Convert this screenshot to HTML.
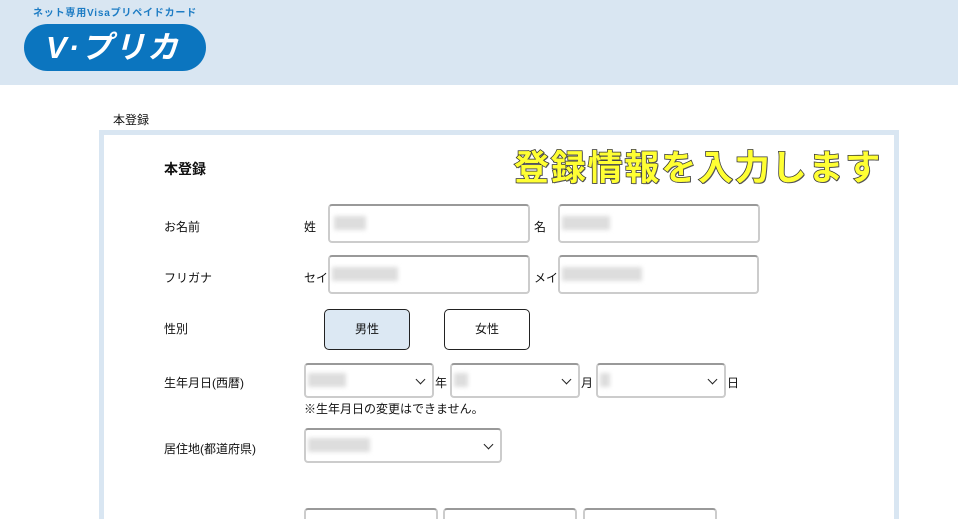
<!DOCTYPE html>
<html><head><meta charset="utf-8"><style>
*{margin:0;padding:0;box-sizing:border-box}
html,body{width:958px;height:519px;overflow:hidden}
body{background:#fff;font-family:"Liberation Sans","Noto Sans CJK JP",sans-serif;font-size:12px;color:#111;position:relative}
.a{position:absolute}
.hdr{left:0;top:0;width:958px;height:85px;background:#d9e6f2}
.pill{left:24px;top:24px;width:182px;height:47px;border-radius:24px;background:#0b75bf;color:#fff;font-weight:bold;font-size:31px;font-style:italic;line-height:47px;padding-left:22px;letter-spacing:2px}
.sub{left:33px;top:4px;font-size:10px;font-weight:bold;color:#1d7cc4;letter-spacing:.8px}
.panel{left:99px;top:130px;width:800px;height:389px;border:5px solid #d9e6f2;border-bottom:none}
.in{border:2px solid #ccc;border-top-color:#999;border-radius:4px;background:#fff}
.blur{background:#ddd;height:14px;filter:blur(2px)}
.btn{border:1px solid #222;border-radius:5px;text-align:center;line-height:38px;font-size:12px}
.chev{position:absolute;right:8px;top:11px;width:7px;height:7px;border-right:1.6px solid #222;border-bottom:1.6px solid #222;transform:rotate(45deg)}
.yl{left:514px;top:140px;font-size:35px;font-weight:bold;color:#ffff33;letter-spacing:1.8px;-webkit-text-stroke:1.5px #333;paint-order:stroke fill;text-shadow:1px 1px 0 #555}
</style></head><body>
<div class="a hdr"></div>
<div class="a sub">ネット専用Visaプリペイドカード</div>
<div class="a pill">V·プリカ</div>
<div class="a" style="left:113px;top:111px">本登録</div>
<div class="a panel"></div>
<div class="a" style="left:164px;top:159px;font-size:14px;font-weight:bold">本登録</div>
<div class="a yl">登録情報を入力します</div>

<div class="a" style="left:164px;top:218px">お名前</div>
<div class="a" style="left:304px;top:218px">姓</div>
<div class="a in" style="left:328px;top:204px;width:202px;height:39px"><div class="blur" style="margin:10px 0 0 4px;width:32px"></div></div>
<div class="a" style="left:534px;top:218px">名</div>
<div class="a in" style="left:558px;top:204px;width:202px;height:39px"><div class="blur" style="margin:10px 0 0 2px;width:48px"></div></div>

<div class="a" style="left:164px;top:269px">フリガナ</div>
<div class="a" style="left:304px;top:269px">セイ</div>
<div class="a in" style="left:328px;top:255px;width:202px;height:39px"><div class="blur" style="margin:10px 0 0 2px;width:66px"></div></div>
<div class="a" style="left:534px;top:269px">メイ</div>
<div class="a in" style="left:558px;top:255px;width:201px;height:39px"><div class="blur" style="margin:10px 0 0 2px;width:80px"></div></div>

<div class="a" style="left:164px;top:320px">性別</div>
<div class="a btn" style="left:324px;top:309px;width:86px;height:41px;background:#dce8f3">男性</div>
<div class="a btn" style="left:444px;top:309px;width:86px;height:41px">女性</div>

<div class="a" style="left:164px;top:374px">生年月日(西暦)</div>
<div class="a in" style="left:304px;top:363px;width:130px;height:35px"><div class="blur" style="margin:8px 0 0 2px;width:38px"></div><i class="chev"></i></div>
<div class="a" style="left:435px;top:374px">年</div>
<div class="a in" style="left:450px;top:363px;width:130px;height:35px"><div class="blur" style="margin:8px 0 0 2px;width:14px"></div><i class="chev"></i></div>
<div class="a" style="left:581px;top:374px">月</div>
<div class="a in" style="left:596px;top:363px;width:130px;height:35px"><div class="blur" style="margin:8px 0 0 2px;width:10px"></div><i class="chev"></i></div>
<div class="a" style="left:727px;top:374px">日</div>
<div class="a" style="left:304px;top:400px">※生年月日の変更はできません。</div>

<div class="a" style="left:164px;top:440px">居住地(都道府県)</div>
<div class="a in" style="left:304px;top:428px;width:198px;height:35px"><div class="blur" style="margin:8px 0 0 2px;width:62px"></div><i class="chev"></i></div>

<div class="a in" style="left:304px;top:508px;width:134px;height:11px;border-bottom:none;border-radius:4px 4px 0 0"></div>
<div class="a in" style="left:443px;top:508px;width:134px;height:11px;border-bottom:none;border-radius:4px 4px 0 0"></div>
<div class="a in" style="left:583px;top:508px;width:134px;height:11px;border-bottom:none;border-radius:4px 4px 0 0"></div>
</body></html>
